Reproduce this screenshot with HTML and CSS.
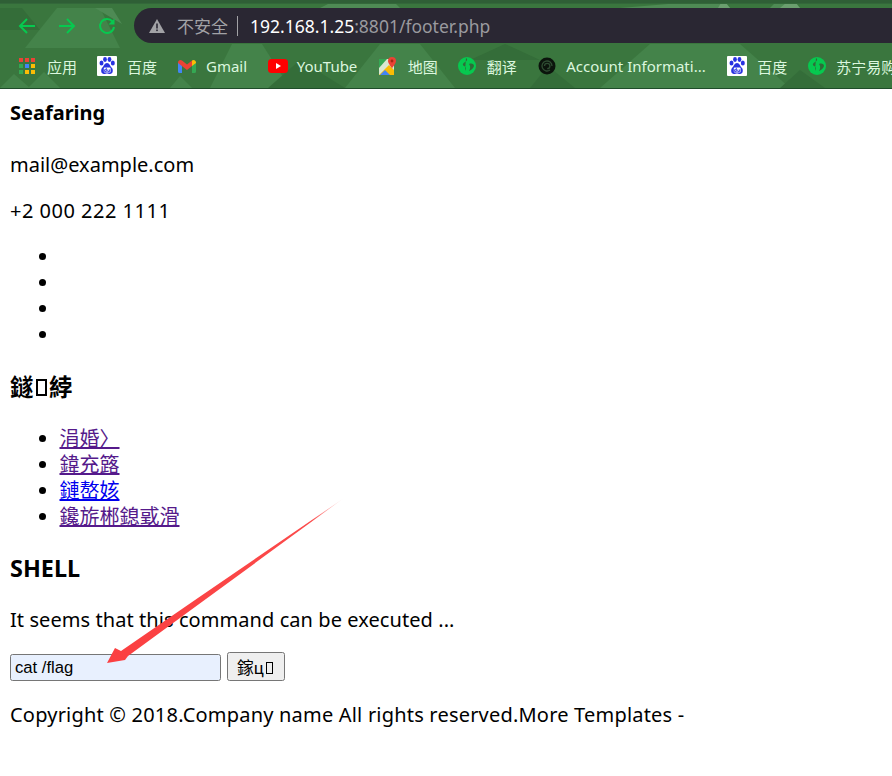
FILE: index.html
```html
<!DOCTYPE html>
<html lang="zh">
<head>
<meta charset="utf-8">
<title>footer.php</title>
<link rel="stylesheet" href="styles.css">
</head>
<body>
<header class="chrome">
  <svg class="chrome-bg" width="892" height="89" viewBox="0 0 892 89" aria-hidden="true">
    <rect width="892" height="89" fill="#3a763e"/>
    <g fill="#44834a">
      <polygon points="25,48 57,8 100,8 120,48"/>
      <polygon points="28,88 44,72 60,88"/>
      <polygon points="210,88 232,44 262,44 290,88"/>
      <polygon points="345,88 380,44 420,44 455,88"/>
      <polygon points="600,88 650,44 740,44 790,88"/>
      <polygon points="0,88 14,74 30,88"/>
      <polygon points="170,88 180,76 192,88"/>
    </g>
    <g fill="#346d39">
      <polygon points="0,30 40,30 22,8 0,8"/>
      <polygon points="268,88 300,60 345,88"/>
      <polygon points="530,88 548,66 575,88"/>
      <polygon points="780,88 800,70 825,88"/>
      <polygon points="470,60 540,60 505,44"/>
    </g>
    <g fill="#4e8a54">
      <polygon points="95,8 112,8 122,24"/>
      <polygon points="320,8 400,8 395,3 330,3"/>
      <polygon points="620,8 730,8 725,3 680,3"/>
      <polygon points="770,8 800,8 790,3 775,3"/>
    </g>
    <g fill="#6a9e6e">
      <polygon points="718,8 730,8 726,3 721,3"/>
      <polygon points="780,8 800,8 796,3 786,3"/>
    </g>
    <rect width="892" height="3" fill="#2f5f36"/>
    <rect y="3" width="892" height="1" fill="#33683a"/>
    <rect y="88" width="892" height="1" fill="#1f4d2a"/>
  </svg>
  <div class="toolbar">
    <svg class="nav-icon" width="20" height="20" viewBox="0 0 20 20"><path d="M18 10H3M10 3l-7 7 7 7"/></svg>
    <svg class="nav-icon" width="20" height="20" viewBox="0 0 20 20"><path d="M2 10h15M10 3l7 7-7 7"/></svg>
    <svg class="nav-icon" width="20" height="20" viewBox="0 0 20 20"><path d="M15.500 5.500A7 7 0 1 0 17 11"/><path class="solid" d="M17.500 2.500v6h-6z"/></svg>
    <div class="address">
      <svg class="warn" width="16" height="14" viewBox="0 0 16 14"><path d="M8 0l8 14H0z" fill="#a2a2a6"/><rect x="7.200" y="4.500" width="1.600" height="5" fill="#2a2733"/><rect x="7.200" y="10.500" width="1.600" height="1.600" fill="#2a2733"/></svg>
      <span class="insecure">不安全</span>
      <span class="divider"></span>
      <span class="url"><span class="host">192.168.1.25</span>:8801/footer.php</span>
    </div>
  </div>
  <nav class="bookmarks">
    <a class="bm bm-apps">
      <svg class="bm-icon" width="16" height="16" viewBox="0 0 16 16">
        <rect x="0" y="0" width="4" height="4" fill="#ea4335"/><rect x="6" y="0" width="4" height="4" fill="#ea4335"/><rect x="12" y="0" width="4" height="4" fill="#ea4335"/>
        <rect x="0" y="6" width="4" height="4" fill="#34a853"/><rect x="6" y="6" width="4" height="4" fill="#4285f4"/><rect x="12" y="6" width="4" height="4" fill="#fbbc05"/>
        <rect x="0" y="12" width="4" height="4" fill="#34a853"/><rect x="6" y="12" width="4" height="4" fill="#fbbc05"/><rect x="12" y="12" width="4" height="4" fill="#fbbc05"/>
      </svg>应用</a>
    <a class="bm">
      <svg class="bm-icon" width="20" height="20" viewBox="0 0 20 20"><use href="#paw"/></svg>百度</a>
    <a class="bm">
      <svg class="bm-icon" width="18" height="14" viewBox="0 0 18 14">
        <path d="M0 3v9.500A1.500 1.500 0 0 0 1.500 14H4V5z" fill="#4285f4"/>
        <path d="M18 3v9.500a1.500 1.500 0 0 1-1.500 1.500H14V5z" fill="#34a853"/>
        <path d="M0 3.500a2.500 2.500 0 0 1 4-2L9 5.500l5-4V7l-5 4-9-7z" fill="#ea4335"/>
        <path d="M14 1.500a2.500 2.500 0 0 1 4 2V4l-4 3z" fill="#fbbc05"/>
      </svg>Gmail</a>
    <a class="bm bm-yt">
      <svg class="bm-icon" width="20" height="14" viewBox="0 0 20 14"><rect width="20" height="14" rx="3.500" fill="#f00"/><path d="M8 4l5 3-5 3z" fill="#fff"/></svg>YouTube</a>
    <a class="bm">
      <svg class="bm-icon" width="18" height="18" viewBox="0 0 18 18">
        <rect y="2" width="15" height="16" fill="#d9e8d2"/><path d="M0 2h8L0 11z" fill="#34a853"/><path d="M0 18l10-10 5 5v5z" fill="#fbbc05"/><path d="M1 18l5-5 5 5z" fill="#4285f4"/>
        <path d="M13 0a4 4 0 0 1 4 4c0 3-4 6-4 8 0-2-4-5-4-8a4 4 0 0 1 4-4z" fill="#ea4335"/><circle cx="13" cy="4" r="1.400" fill="#a52714"/>
      </svg>地图</a>
    <a class="bm bm-loose">
      <svg class="bm-icon" width="18" height="18" viewBox="0 0 18 18"><use href="#globe"/></svg>翻译</a>
    <a class="bm bm-loose">
      <svg class="bm-icon" width="18" height="18" viewBox="0 0 18 18"><circle cx="9" cy="9" r="8.500" fill="#0b140c"/><path d="M14 9a5 5 0 1 0-2 4M6.500 9a2.700 2.700 0 1 1 2.700 2.700" fill="none" stroke="#2f4d32" stroke-width="1.300"/></svg>Account Informati...</a>
    <a class="bm">
      <svg class="bm-icon" width="20" height="20" viewBox="0 0 20 20"><use href="#paw"/></svg>百度</a>
    <a class="bm">
      <svg class="bm-icon" width="18" height="18" viewBox="0 0 18 18"><use href="#globe"/></svg>苏宁易购</a>
  </nav>
  <svg class="defs" width="0" height="0">
    <symbol id="paw" viewBox="0 0 20 20">
      <rect width="20" height="20" rx="1" fill="#fff"/>
      <g fill="#2932e1">
        <ellipse cx="4.500" cy="7" rx="2" ry="2.500"/><ellipse cx="8" cy="3.500" rx="1.900" ry="2.400"/><ellipse cx="12.500" cy="3.500" rx="1.900" ry="2.400"/><ellipse cx="15.800" cy="7" rx="2" ry="2.500"/>
        <path d="M10 7c2.500 0 3 3 5 5 1.500 2 1 6-2 6-1.500 0-2-.5-3-.5s-1.500.5-3 .5c-3 0-3.500-4-2-6 2-2 2.500-5 5-5z"/>
      </g>
      <rect x="6.800" y="11.500" width="6.800" height="5" rx="1" fill="#fff"/>
      <path d="M9.300 11.800v3.800H7.600v-1.900h1.700M10.800 13.500v2.100h1.800v-2.100" fill="none" stroke="#2932e1" stroke-width=".9"/>
    </symbol>
    <symbol id="globe" viewBox="0 0 18 18">
      <circle cx="9" cy="9" r="9" fill="#06c94f"/>
      <path d="M8 1c2 1.500 1 3-1 4s-3 3-1 4c3 1 2 3 1 5M11 7c3-1 5 0 5 2-1 3-3 4-5 5 1-2 2-4 0-7z" fill="#2f6b39"/>
    </symbol>
  </svg>
</header>

<main class="page">
  <h4>Seafaring</h4>
  <p>mail@example.com</p>
  <p class="phone">+2 000 222 1111</p>
  <ul class="bullets">
    <li></li>
    <li></li>
    <li></li>
    <li></li>
  </ul>
  <h3>鐩<span class="tofu"></span>綍</h3>
  <ul class="links">
    <li><a class="visited" href="#a">涓婚〉</a></li>
    <li><a class="visited" href="#b">鍏充簬</a></li>
    <li><a class="unvisited" href="#c">鏈嶅姟</a></li>
    <li><a class="visited" href="#d">鑱旂郴鎴戜滑</a></li>
  </ul>
  <h3>SHELL</h3>
  <p class="note">It seems that this command can be executed ...</p>
  <form class="shell">
    <input class="cmd" type="text" value="cat /flag">
    <button class="run" type="button">鎵ц<span class="tofu tofu-thin"></span></button>
  </form>
  <p class="copy">Copyright © 2018.Company name All rights reserved.More Templates -</p>
</main>

<svg class="arrow" width="892" height="776" viewBox="0 0 892 776" aria-hidden="true">
  <defs>
    <linearGradient id="fade" gradientUnits="userSpaceOnUse" x1="345" y1="498" x2="108" y2="662">
      <stop offset="0" stop-color="#fb4a4a" stop-opacity="0"/>
      <stop offset=".14" stop-color="#fb4a4a"/>
      <stop offset="1" stop-color="#fb3f41"/>
    </linearGradient>
  </defs>
  <path d="M344 498L195 600 121 651 115 648 107 663 125 660 128 656 195 607z" fill="url(#fade)"/>
</svg>
```
FILE: styles.css
```css
html, body {
  margin: 0;
  padding: 0;
  background: #fff;
}
body {
  position: relative;
  width: 892px;
  height: 776px;
  overflow: hidden;
  color: #000;
  font-family: "Noto Sans", "Noto Sans CJK SC", sans-serif;
  font-size: 20px;
}
.chrome {
  position: relative;
  height: 89px;
  overflow: hidden;
}
.chrome-bg {
  position: absolute;
  inset: 0;
}
.defs {
  position: absolute;
}
.toolbar {
  position: relative;
  display: flex;
  align-items: center;
  height: 35px;
  padding-top: 8px;
  padding-left: 17px;
  gap: 20px;
}
.nav-icon {
  flex: none;
  fill: none;
  stroke: #06c94f;
  stroke-width: 2;
}
.nav-icon .solid {
  fill: #06c94f;
  stroke: none;
}
.address {
  display: flex;
  align-items: center;
  flex: 1;
  height: 35px;
  margin-left: -3px;
  padding-left: 15px;
  background: #2a2733;
  border-radius: 18px 0 0 18px;
}
.warn {
  flex: none;
}
.insecure {
  margin-left: 12px;
  font-size: 17px;
  color: #a2a2a6;
  font-family: "Noto Sans CJK SC", sans-serif;
}
.divider {
  width: 1px;
  height: 20px;
  margin: 0 12px 0 9px;
  background: #a2a2a6;
}
.url {
  font-size: 17.500px;
  color: #9a9a9f;
  white-space: nowrap;
}
.host {
  color: #fff;
}
.bookmarks {
  position: relative;
  display: flex;
  align-items: center;
  height: 46px;
  padding-left: 19px;
  gap: 20.600px;
  white-space: nowrap;
  font-size: 15px;
  color: #dcf7df;
}
.bm {
  display: flex;
  align-items: center;
  gap: 10.400px;
  flex: none;
}
.bm-apps {
  gap: 12px;
  margin-right: -1px;
}
.bm-yt {
  gap: 9px;
  margin-right: 1.400px;
}
.bm-loose {
  margin-right: .5px;
}
.bm-icon {
  flex: none;
}
.page {
  padding: 11px 10px 0;
}
h4 {
  margin: 0 0 26px;
  font-size: 20px;
  line-height: 26px;
  font-weight: 700;
}
h3 {
  margin: 23.400px 0;
  font-size: 23.400px;
  line-height: 30px;
  font-weight: 700;
}
p {
  margin: 20px 0;
  line-height: 26px;
}
.phone {
  letter-spacing: .5px;
}
.note {
  letter-spacing: .07px;
  margin-top: 24px;
  margin-bottom: 19px;
}
.copy {
  letter-spacing: .2px;
  margin-top: 21px;
}
ul {
  margin: 20px 0;
  padding-left: 49.500px;
}
.bullets {
  margin-bottom: 24.400px;
}
.links {
  margin: 23.400px 0;
}
li {
  line-height: 26px;
  height: 26px;
}
.tofu {
  display: inline-block;
  box-sizing: border-box;
  width: .47em;
  height: .73em;
  margin: 0 .1em;
  border: 2px solid currentColor;
}
.tofu-thin {
  border-width: 1px;
}
.visited {
  color: #551a8b;
}
.unvisited {
  color: #00e;
}
.shell {
  display: flex;
  align-items: flex-end;
  gap: 6px;
}
.cmd {
  box-sizing: border-box;
  width: 211px;
  height: 27px;
  margin: 0;
  padding: 0 4px;
  border: 1px solid #767676;
  border-radius: 2.500px;
  background: #e8f0fe;
  color: #000;
  font-family: "Liberation Sans", sans-serif;
  font-size: 16.670px;
}
.run {
  box-sizing: border-box;
  width: 58px;
  height: 29px;
  margin: 0;
  padding: 0;
  border: 1px solid #767676;
  border-radius: 2.500px;
  background: #efefef;
  color: #000;
  font-family: "Noto Sans CJK SC", sans-serif;
  font-size: 16.670px;
}
.arrow {
  position: absolute;
  left: 0;
  top: 0;
  pointer-events: none;
}
```
